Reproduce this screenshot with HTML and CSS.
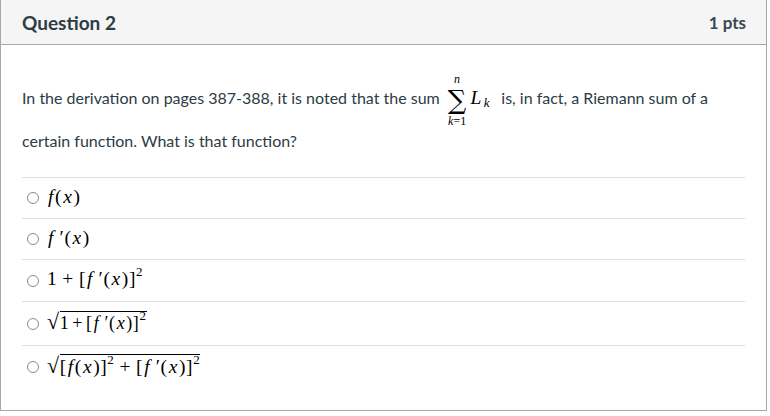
FILE: index.html
```html
<!DOCTYPE html>
<html>
<head>
<meta charset="utf-8">
<link rel="stylesheet" href="styles.css">
</head>
<body>
<div class="question">
  <div class="header">
    <span class="title">Question 2</span>
    <span class="pts">1 pts</span>
  </div>
  <div class="content">
    <div class="text">
      <p class="line1">In the derivation on pages 387-388, it is noted that the sum <span class="sum"><span class="lim high"><i>n</i></span><span class="sigma">&sum;</span><span class="lim low"><i>k</i>=1</span></span><span class="m lk"><i>L</i><sub><i>k</i></sub></span> is, in fact, a Riemann sum of a</p>
      <p class="line2">certain function. What is that function?</p>
    </div>
    <div class="answers">
      <div class="answer"><span class="radio"></span><span class="m"><i>f</i>(<i>x</i>)</span></div>
      <div class="answer"><span class="radio"></span><span class="m"><i>f</i>&thinsp;&prime;(<i>x</i>)</span></div>
      <div class="answer r3"><span class="radio"></span><span class="m">1<span class="op">+</span>[<i>f</i>&thinsp;&prime;(<i>x</i>)]<sup>2</sup></span></div>
      <div class="answer r4"><span class="radio"></span><span class="m"><span class="root">&radic;</span><span class="under">1<span class="op">+</span>[<i>f</i>&thinsp;&prime;(<i>x</i>)]<sup>2</sup></span></span></div>
      <div class="answer r5"><span class="radio"></span><span class="m"><span class="root">&radic;</span><span class="under">[<i>f</i>(<i>x</i>)]<sup>2</sup><span class="op">+</span>[<i>f</i>&thinsp;&prime;(<i>x</i>)]<sup>2</sup></span></span></div>
    </div>
  </div>
</div>
</body>
</html>
```
FILE: styles.css
```css
html, body { margin: 0; padding: 0; background: #fff; }
body { font-family: Lato, "Liberation Sans", sans-serif; color: #2d3b45; }
.question {
  width: 765px;
  height: 410px;
  border: 1px solid #a8a8a8;
  border-top: none;
}
.header {
  height: 44px;
  background: #f5f5f5;
  border-bottom: 1px solid #a8a8a8;
  display: flex;
  align-items: center;
  justify-content: space-between;
  padding: 0 20px 0 21px;
}
.title { font-size: 19px; font-weight: bold; }
.pts { font-size: 17px; font-weight: bold; color: #3a474f; }
.content { padding: 0 21px; }
.text { font-size: 16px; padding-top: 28px; }
.text p { margin: 0; }
.line1 { line-height: 22px; }
.line2 { line-height: 22px; margin-top: 3px !important; }
.sum {
  display: inline-flex;
  flex-direction: column;
  align-items: center;
  vertical-align: middle;
  margin: 0 3px 0 4px;
  color: #000;
}
.lim { font-size: 12px; line-height: 12px; font-family: "Liberation Serif", serif; }
.lim.high { margin-bottom: 3px; }
.lim.low { margin-top: 3px; }
.sigma { font-size: 26px; line-height: 24px; font-family: "DejaVu Serif", serif; }
.m { font-family: "Liberation Serif", serif; font-size: 19.5px; color: #000; letter-spacing: 0.6px; }
.m i { padding: 0 1px; font-style: italic; }
.op { padding: 0 5px; }
.lk { margin-right: 6px; }
.m sub { font-size: 13px; vertical-align: -3px; line-height: 0; }
.m sup { font-size: 13px; vertical-align: 9px; line-height: 0; }
.answers { margin-top: 25px; }
.answer {
  height: 40px;
  border-top: 1px solid #dddddd;
  display: flex;
  align-items: center;
  gap: 8px;
  padding-left: 5px;
}
.answer.r3 { height: 41px; }
.answer.r4 { height: 43px; }
.answer.r5 { height: 42px; }
.answer .m { margin-top: -3px; }
.radio {
  width: 10px; height: 10px;
  border: 1px solid #8a8a8a;
  border-radius: 50%;
  flex: none;
}
.root { font-size: 22px; }
.under { border-top: 1px solid #000; padding-top: 1px; }
.r4 .under { font-size: 18px; }
.r4 .under .op { padding: 0 3px; }
```
